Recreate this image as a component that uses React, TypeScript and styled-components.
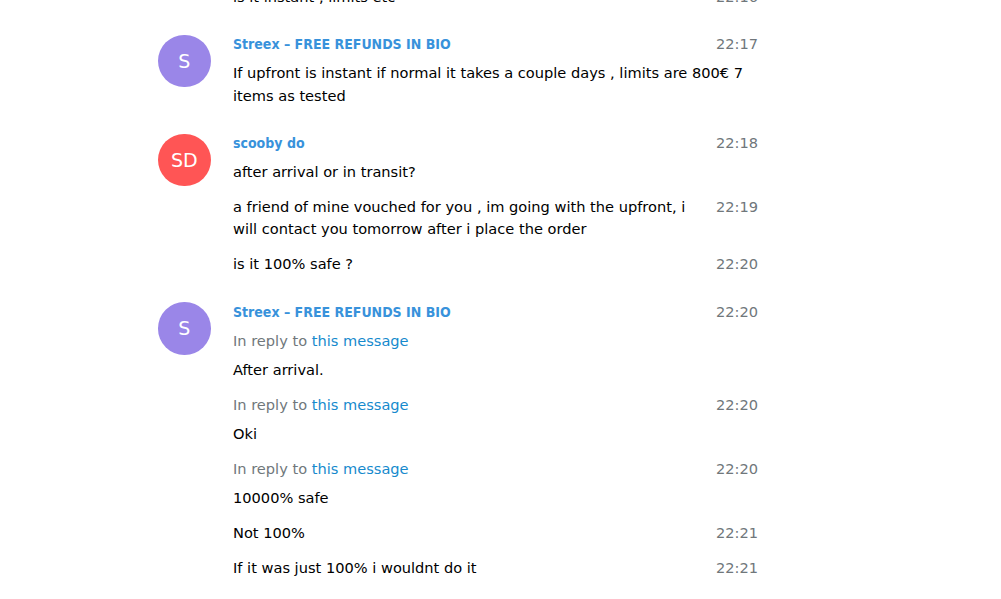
import React from 'react';
import styled, { createGlobalStyle } from 'styled-components';

interface Msg {
  id: number;
  joined?: boolean;
  from?: string;
  initials?: string;
  color?: string;
  time: string;
  reply?: boolean;
  lines: string;
}

const messages: Msg[] = [
  { id: 1, joined: true, time: '22:16', lines: 'is it instant , limits etc' },
  {
    id: 2,
    from: 'Streex – FREE REFUNDS IN BIO',
    initials: 'S',
    color: '#9a86e8',
    time: '22:17',
    lines: 'If upfront is instant if normal it takes a couple days , limits are 800€ 7 items as tested',
  },
  {
    id: 3,
    from: 'scooby do',
    initials: 'SD',
    color: '#ff5555',
    time: '22:18',
    lines: 'after arrival or in transit?',
  },
  {
    id: 4,
    joined: true,
    time: '22:19',
    lines: 'a friend of mine vouched for you , im going with the upfront, i will contact you tomorrow after i place the order',
  },
  { id: 5, joined: true, time: '22:20', lines: 'is it 100% safe ?' },
  {
    id: 6,
    from: 'Streex – FREE REFUNDS IN BIO',
    initials: 'S',
    color: '#9a86e8',
    time: '22:20',
    reply: true,
    lines: 'After arrival.',
  },
  { id: 7, joined: true, time: '22:20', reply: true, lines: 'Oki' },
  { id: 8, joined: true, time: '22:20', reply: true, lines: '10000% safe' },
  { id: 9, joined: true, time: '22:21', lines: 'Not 100%' },
  { id: 10, joined: true, time: '22:21', lines: 'If it was just 100% i wouldnt do it' },
];

function App() {
  return (
    <>
      <GlobalStyle />
      <Page>
        <History>
          {messages.map((m) => (
            <Message key={m.id} $joined={m.joined}>
              {!m.joined && (
                <Avatar $color={m.color || '#9a86e8'}>{m.initials}</Avatar>
              )}
              <Body $indent={m.joined}>
                <Time>{m.time}</Time>
                {m.from && <FromName>{m.from}</FromName>}
                {m.reply && (
                  <ReplyTo>
                    In reply to <ReplyLink href="#">this message</ReplyLink>
                  </ReplyTo>
                )}
                <Text>{m.lines}</Text>
              </Body>
            </Message>
          ))}
        </History>
      </Page>
    </>
  );
}

// Styles
const GlobalStyle = createGlobalStyle`
  html, body {
    margin: 0;
    padding: 0;
    background: #ffffff;
    overflow: hidden;
  }
  body {
    font-family: 'DejaVu Sans', 'Liberation Sans', sans-serif;
    font-size: 14.6px;
    line-height: 22.5px;
    color: #000000;
  }
`;

const Page = styled.div`
  width: 600px;
  margin-left: 158px;
`;

const History = styled.div`
  margin-top: -26.75px;
`;

const Message = styled.div<{ $joined?: boolean }>`
  display: flex;
  align-items: flex-start;
  padding: 12.5px 0;
  margin-top: ${(p) => (p.$joined ? '-12.5px' : '0')};
`;

const Avatar = styled.div<{ $color: string }>`
  flex: 0 0 52.5px;
  width: 52.5px;
  height: 52.5px;
  margin: 1.5px 22.5px -30px 0;
  border-radius: 50%;
  background: ${(p) => p.$color};
  color: #ffffff;
  font-size: 19px;
  line-height: 52.5px;
  text-align: center;
`;

const Body = styled.div<{ $indent?: boolean }>`
  flex: 1;
  min-width: 0;
  margin-left: ${(p) => (p.$indent ? '75px' : '0')};
`;

const Time = styled.div`
  float: right;
  color: #70777b;
  margin-left: 16px;
`;

const FromName = styled.div`
  color: #3892db;
  font-family: 'DejaVu Sans Condensed', 'DejaVu Sans', sans-serif;
  font-weight: bold;
  font-size: 14px;
  padding-bottom: 6.25px;
`;

const ReplyTo = styled.div`
  color: #70777b;
  padding-bottom: 6.5px;
`;

const ReplyLink = styled.a`
  color: #168acd;
  text-decoration: none;
`;

const Text = styled.div`
  overflow-wrap: break-word;
`;

export default App;
